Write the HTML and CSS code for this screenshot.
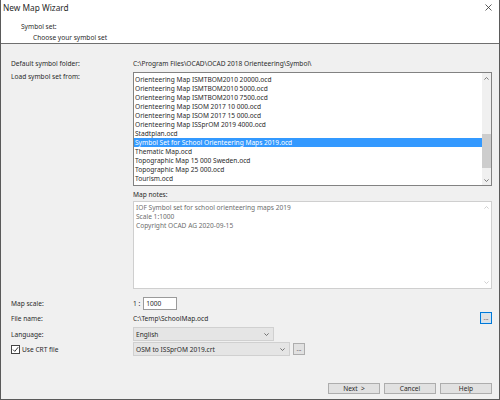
FILE: index.html
```html
<!DOCTYPE html>
<html lang="en">
<head>
  <meta charset="UTF-8" />
  <title>New Map Wizard</title>
  <link rel="stylesheet" href="styles.css">
</head>
<body>
  <div class="window">
    <!-- Header -->
    <div class="header">
      <div class="title-bar">
        <span class="title">New Map Wizard</span>
        <svg class="close" width="7" height="7" viewBox="0 0 7 7">
          <path d="M0.5 0.5 L6.5 6.5 M6.5 0.5 L0.5 6.5" stroke="#333" stroke-width="0.8" fill="none"/>
        </svg>
      </div>
      <div class="step-title">Symbol set:</div>
      <div class="step-sub">Choose your symbol set</div>
    </div>

    <!-- Content -->
    <div class="content">
      <div class="row row-folder">
        <span class="label">Default symbol folder:</span>
        <span>C:\Program Files\OCAD\OCAD 2018 Orienteering\Symbol\</span>
      </div>

      <div class="row row-list">
        <span class="label label-top">Load symbol set from:</span>
        <div class="listbox">
          <ul class="items" id="items"></ul>
          <div class="scrollbar">
            <div class="arrow">
              <svg width="5" height="3" viewBox="0 0 5 3"><path d="M0.4 2.6 L2.5 0.5 L4.6 2.6" stroke="#606060" stroke-width="0.8" fill="none"/></svg>
            </div>
            <div class="track-top"></div>
            <div class="thumb"></div>
            <div class="track"></div>
            <div class="arrow">
              <svg width="5" height="3" viewBox="0 0 5 3"><path d="M0.4 0.4 L2.5 2.5 L4.6 0.4" stroke="#606060" stroke-width="0.8" fill="none"/></svg>
            </div>
          </div>
        </div>
      </div>

      <div class="row row-notes-label">
        <span></span>
        <span>Map notes:</span>
      </div>

      <div class="row row-notes">
        <span></span>
        <div class="notes">
          <div class="notes-text">
            <div>IOF Symbol set for school orienteering maps 2019</div>
            <div>Scale 1:1000</div>
            <div>Copyright OCAD AG 2020-09-15</div>
          </div>
          <div class="notes-scroll">
            <svg width="5" height="3" viewBox="0 0 5 3"><path d="M0.4 2.6 L2.5 0.5 L4.6 2.6" stroke="#c4c4c4" stroke-width="0.8" fill="none"/></svg>
            <svg width="5" height="3" viewBox="0 0 5 3"><path d="M0.4 0.4 L2.5 2.5 L4.6 0.4" stroke="#c4c4c4" stroke-width="0.8" fill="none"/></svg>
          </div>
        </div>
      </div>

      <div class="row row-scale">
        <span class="label">Map scale:</span>
        <div class="scale">
          <span class="scale-prefix">1 :</span>
          <div class="input">1000</div>
        </div>
      </div>

      <div class="row row-file">
        <span class="label">File name:</span>
        <div class="file">
          <span>C:\Temp\SchoolMap.ocd</span>
          <div class="dots dots-focus">...</div>
        </div>
      </div>

      <div class="row row-lang">
        <span class="label">Language:</span>
        <div class="combo combo-lang">
          <span>English</span>
          <svg width="5" height="3" viewBox="0 0 5 3"><path d="M0.4 0.4 L2.5 2.5 L4.6 0.4" stroke="#555" stroke-width="0.8" fill="none"/></svg>
        </div>
      </div>

      <div class="row row-crt">
        <label class="check">
          <span class="box">
            <svg width="7" height="7" viewBox="0 0 7 7"><path d="M1 3.6 L2.8 5.4 L6.2 1.2" stroke="#222" stroke-width="0.9" fill="none"/></svg>
          </span>
          Use CRT file
        </label>
        <div class="crt">
          <div class="combo combo-crt">
            <span>OSM to ISSprOM 2019.crt</span>
            <svg width="5" height="3" viewBox="0 0 5 3"><path d="M0.4 0.4 L2.5 2.5 L4.6 0.4" stroke="#555" stroke-width="0.8" fill="none"/></svg>
          </div>
          <div class="dots">...</div>
        </div>
      </div>

      <div class="buttons">
        <button>Next &nbsp;&gt;</button>
        <button>Cancel</button>
        <button>Help</button>
      </div>
    </div>
  </div>

  <script>
    const files = [
      "Orienteering Map ISMTBOM2010 20000.ocd",
      "Orienteering Map ISMTBOM2010 5000.ocd",
      "Orienteering Map ISMTBOM2010 7500.ocd",
      "Orienteering Map ISOM 2017 10 000.ocd",
      "Orienteering Map ISOM 2017 15 000.ocd",
      "Orienteering Map ISSprOM 2019 4000.ocd",
      "Stadtplan.ocd",
      "Symbol Set for School Orienteering Maps 2019.ocd",
      "Thematic Map.ocd",
      "Topographic Map 15 000 Sweden.ocd",
      "Topographic Map 25 000.ocd",
      "Tourism.ocd"
    ];
    const selected = 7;

    const list = document.getElementById("items");
    files.forEach((name, index) => {
      const li = document.createElement("li");
      li.textContent = name;
      if (index === selected) li.className = "selected";
      list.appendChild(li);
    });
  </script>
</body>
</html>
```

FILE: styles.css
```css
* {
  box-sizing: border-box;
  margin: 0;
  padding: 0;
}

body {
  font-family: 'Noto Sans', 'Open Sans', sans-serif;
  font-size: 6.6px;
  color: #2a2a2a;
  background: #fff;
}

.window {
  width: 500px;
  height: 400px;
  border: 1px solid #5a5a5a;
  border-top: none;
  display: flex;
  flex-direction: column;
}

/* Header */
.header {
  height: 44px;
  background: #fff;
  border-bottom: 1px solid #6f6f6f;
  padding: 2px 0 0 2px;
}

.title-bar {
  display: flex;
  justify-content: space-between;
  align-items: center;
  height: 11px;
  padding-right: 7px;
}

.title {
  font-size: 8.3px;
}

.step-title {
  margin: 9px 0 0 18px;
  line-height: 10px;
}

.step-sub {
  margin: 1px 0 0 30px;
  line-height: 10px;
}

/* Content */
.content {
  flex: 1;
  background: #f0f0f0;
  padding: 14px 7px 0 10px;
  display: flex;
  flex-direction: column;
}

.row {
  display: grid;
  grid-template-columns: 122px 1fr;
  align-items: center;
  line-height: 9px;
}

.row-folder {
  height: 10px;
}

.row-list {
  margin-top: 4px;
  align-items: start;
}

.label-top {
  line-height: 9px;
}

.listbox {
  height: 114px;
  background: #fff;
  border: 1px solid #828282;
  display: flex;
}

.items {
  list-style: none;
  flex: 1;
  padding-top: 2px;
}

.items li {
  height: 9px;
  line-height: 9px;
  padding-left: 1px;
  white-space: nowrap;
}

.items li.selected {
  background: #3399ff;
  color: #fff;
}

.scrollbar {
  width: 9px;
  background: #f0f0f0;
  display: flex;
  flex-direction: column;
}

.arrow {
  height: 10px;
  display: flex;
  align-items: center;
  justify-content: center;
}

.track-top {
  height: 51px;
}

.thumb {
  height: 34px;
  background: #cdcdcd;
}

.track {
  flex: 1;
}

.row-notes-label {
  margin-top: 4px;
  height: 9px;
}

.row-notes {
  margin-top: 2px;
}

.notes {
  height: 88px;
  background: #fff;
  border: 1px solid #cfcfcf;
  display: flex;
}

.notes-text {
  flex: 1;
  padding: 1px 0 0 2px;
  color: #6d6d6d;
}

.notes-text div {
  height: 9px;
}

.notes-scroll {
  width: 9px;
  display: flex;
  flex-direction: column;
  justify-content: space-between;
  align-items: center;
  padding: 4px 0;
}

.row-scale {
  margin-top: 8px;
  height: 13px;
}

.scale {
  display: flex;
  align-items: center;
  gap: 3px;
}

.input {
  width: 34px;
  height: 13px;
  background: #fff;
  border: 1px solid #9a9a9a;
  padding-left: 2px;
  line-height: 11px;
}

.row-file {
  margin-top: 2px;
  height: 12px;
}

.file {
  display: flex;
  justify-content: space-between;
  align-items: center;
}

.dots {
  width: 12px;
  height: 12px;
  background: #e1e1e1;
  border: 1px solid #adadad;
  text-align: center;
  line-height: 10px;
  font-size: 6px;
}

.dots-focus {
  border: 1px solid #0078d7;
  box-shadow: inset 0 0 0 1px #cce4f7;
}

.row-lang {
  margin-top: 3px;
  height: 13px;
}

.combo {
  height: 14px;
  background: #e5e5e5;
  border: 1px solid #d0d0d0;
  display: flex;
  justify-content: space-between;
  align-items: center;
  padding: 0 4px 0 2px;
}

.combo-lang {
  width: 141px;
}

.row-crt {
  margin-top: 2px;
  height: 14px;
}

.check {
  display: flex;
  align-items: center;
  gap: 2px;
}

.box {
  width: 9px;
  height: 9px;
  border: 1px solid #444;
  background: #fff;
  display: flex;
  align-items: center;
  justify-content: center;
}

.crt {
  display: flex;
  align-items: center;
  gap: 3px;
}

.combo-crt {
  width: 157px;
}

/* Buttons */
.buttons {
  margin-top: 27px;
  display: flex;
  justify-content: flex-end;
  gap: 4px;
}

.buttons button {
  width: 52px;
  height: 11px;
  background: #e1e1e1;
  border: 1px solid #adadad;
  font-family: inherit;
  font-size: 6.6px;
  line-height: 9px;
  color: #2a2a2a;
}
```
